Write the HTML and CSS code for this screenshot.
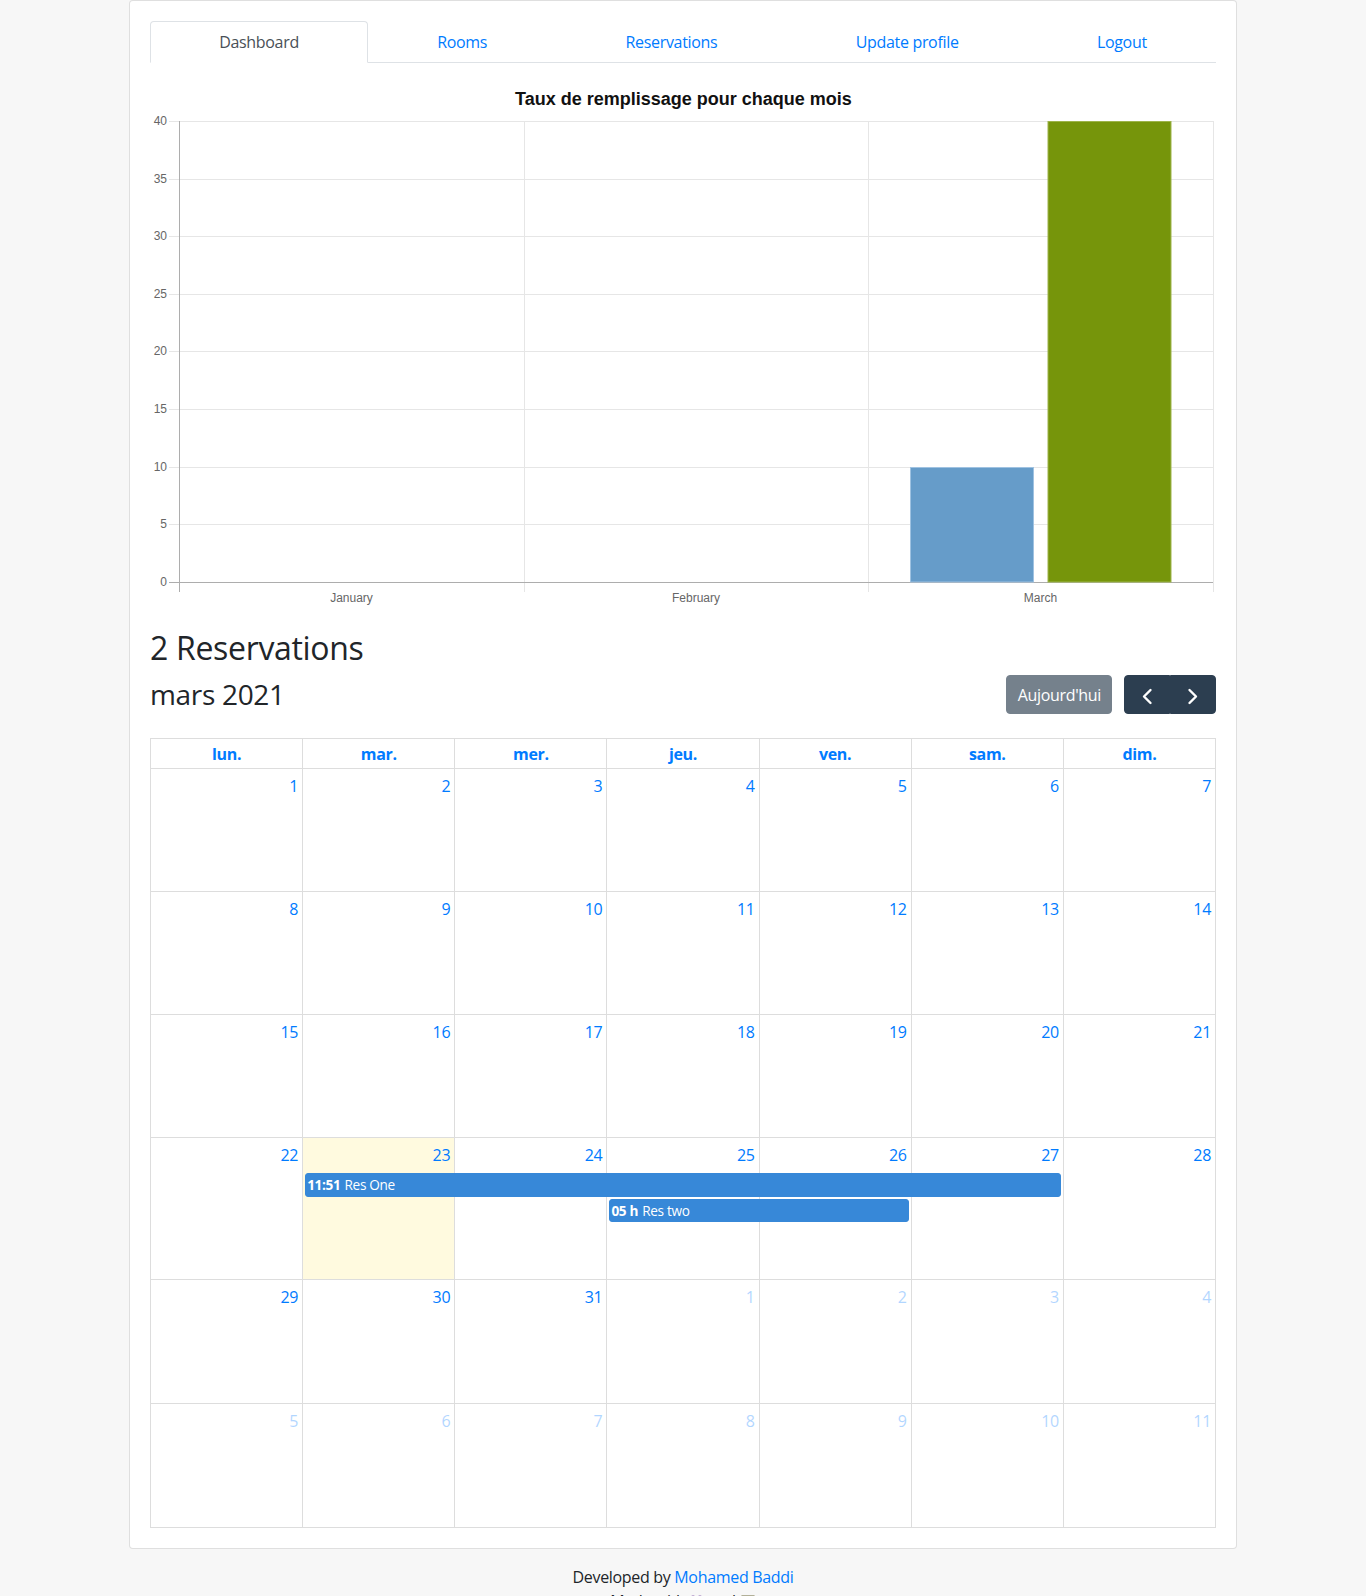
FILE: index.html
```html
<!DOCTYPE html>
<html lang="fr">
<head>
<meta charset="utf-8">
<title>Dashboard</title>
<link rel="stylesheet" href="styles.css">
</head>
<body>
<div class="container">
  <div class="card">
    <div class="card-body">
      <ul class="nav-tabs">
        <li class="nav-item"><a class="nav-link active">Dashboard</a></li>
        <li class="nav-item"><a class="nav-link">Rooms</a></li>
        <li class="nav-item"><a class="nav-link">Reservations</a></li>
        <li class="nav-item"><a class="nav-link">Update profile</a></li>
        <li class="nav-item"><a class="nav-link">Logout</a></li>
      </ul>

      <svg class="chart" width="1066" height="566" viewBox="0 0 1066 566" xmlns="http://www.w3.org/2000/svg">
        <text class="chart-title" x="533.5" y="42" text-anchor="middle">Taux de remplissage pour chaque mois</text>
        <g class="grid-h">
          <line x1="19" y1="58.5" x2="1063" y2="58.5"/>
          <line x1="19" y1="116.5" x2="1063" y2="116.5"/>
          <line x1="19" y1="173.5" x2="1063" y2="173.5"/>
          <line x1="19" y1="231.5" x2="1063" y2="231.5"/>
          <line x1="19" y1="288.5" x2="1063" y2="288.5"/>
          <line x1="19" y1="346.5" x2="1063" y2="346.5"/>
          <line x1="19" y1="404.5" x2="1063" y2="404.5"/>
          <line x1="19" y1="461.5" x2="1063" y2="461.5"/>
          <line x1="374.5" y1="58" x2="374.5" y2="529"/>
          <line x1="718.5" y1="58" x2="718.5" y2="529"/>
          <line x1="1063.5" y1="58" x2="1063.5" y2="529"/>
        </g>
        <g class="axis">
          <line x1="19" y1="519.5" x2="1063" y2="519.5"/>
          <line x1="29.5" y1="58" x2="29.5" y2="529"/>
        </g>
        <g class="tick-y" text-anchor="end">
          <text x="17" y="62">40</text>
          <text x="17" y="120">35</text>
          <text x="17" y="177">30</text>
          <text x="17" y="235">25</text>
          <text x="17" y="292">20</text>
          <text x="17" y="350">15</text>
          <text x="17" y="408">10</text>
          <text x="17" y="465">5</text>
          <text x="17" y="523">0</text>
        </g>
        <g class="tick-x" text-anchor="middle">
          <text x="201.5" y="539">January</text>
          <text x="546" y="539">February</text>
          <text x="890.5" y="539">March</text>
        </g>
        <rect class="bar-blue" x="760.5" y="404.5" width="123" height="114.5"/>
        <rect class="bar-green" x="898" y="58.5" width="123" height="460.5"/>
      </svg>

      <h2 class="count">2 Reservations</h2>

      <div class="calendar">
        <div class="toolbar">
          <h2 class="cal-title">mars 2021</h2>
          <div class="tools">
            <button class="btn btn-today" disabled>Aujourd'hui</button>
            <div class="btn-group">
              <button class="btn btn-icon btn-prev" aria-label="prev">
                <svg width="24" height="24" viewBox="0 0 24 24"><polyline points="15.5,7 9,13.5 15.5,20" fill="none" stroke="#fff" stroke-width="2.4" stroke-linecap="round" stroke-linejoin="round"/></svg>
              </button>
              <button class="btn btn-icon btn-next" aria-label="next">
                <svg width="24" height="24" viewBox="0 0 24 24"><polyline points="8.5,7 15,13.5 8.5,20" fill="none" stroke="#fff" stroke-width="2.4" stroke-linecap="round" stroke-linejoin="round"/></svg>
              </button>
            </div>
          </div>
        </div>

        <div class="cal-grid">
          <div class="head-row">
            <div class="head-cell">lun.</div>
            <div class="head-cell">mar.</div>
            <div class="head-cell">mer.</div>
            <div class="head-cell">jeu.</div>
            <div class="head-cell">ven.</div>
            <div class="head-cell">sam.</div>
            <div class="head-cell">dim.</div>
          </div>

          <div class="week">
            <div class="day"><span class="num">1</span></div>
            <div class="day"><span class="num">2</span></div>
            <div class="day"><span class="num">3</span></div>
            <div class="day"><span class="num">4</span></div>
            <div class="day"><span class="num">5</span></div>
            <div class="day"><span class="num">6</span></div>
            <div class="day"><span class="num">7</span></div>
          </div>
          <div class="week">
            <div class="day"><span class="num">8</span></div>
            <div class="day"><span class="num">9</span></div>
            <div class="day"><span class="num">10</span></div>
            <div class="day"><span class="num">11</span></div>
            <div class="day"><span class="num">12</span></div>
            <div class="day"><span class="num">13</span></div>
            <div class="day"><span class="num">14</span></div>
          </div>
          <div class="week">
            <div class="day"><span class="num">15</span></div>
            <div class="day"><span class="num">16</span></div>
            <div class="day"><span class="num">17</span></div>
            <div class="day"><span class="num">18</span></div>
            <div class="day"><span class="num">19</span></div>
            <div class="day"><span class="num">20</span></div>
            <div class="day"><span class="num">21</span></div>
          </div>
          <div class="week week-events">
            <div class="day"><span class="num">22</span></div>
            <div class="day today"><span class="num">23</span></div>
            <div class="day"><span class="num">24</span></div>
            <div class="day"><span class="num">25</span></div>
            <div class="day"><span class="num">26</span></div>
            <div class="day"><span class="num">27</span></div>
            <div class="day"><span class="num">28</span></div>
            <div class="event event-one"><b class="ev-time">11:51</b><span class="ev-title">Res One</span></div>
            <div class="event event-two"><b class="ev-time">05 h</b><span class="ev-title">Res two</span></div>
          </div>
          <div class="week week-tall">
            <div class="day"><span class="num">29</span></div>
            <div class="day"><span class="num">30</span></div>
            <div class="day"><span class="num">31</span></div>
            <div class="day other"><span class="num">1</span></div>
            <div class="day other"><span class="num">2</span></div>
            <div class="day other"><span class="num">3</span></div>
            <div class="day other"><span class="num">4</span></div>
          </div>
          <div class="week week-tall">
            <div class="day other"><span class="num">5</span></div>
            <div class="day other"><span class="num">6</span></div>
            <div class="day other"><span class="num">7</span></div>
            <div class="day other"><span class="num">8</span></div>
            <div class="day other"><span class="num">9</span></div>
            <div class="day other"><span class="num">10</span></div>
            <div class="day other"><span class="num">11</span></div>
          </div>
        </div>
      </div>
    </div>
  </div>
</div>

<footer class="footer">
  <p class="footer-line">Developed by <a class="link">Mohamed Baddi</a></p>
  <p class="footer-line">Made with
    <svg class="ic-heart" width="15" height="14" viewBox="0 0 15 14"><path d="M7.5 13 C2 9 0.5 6.5 0.5 4.2 C0.5 2 2.2 0.5 4.1 0.5 C5.5 0.5 6.8 1.3 7.5 2.5 C8.2 1.3 9.5 0.5 10.9 0.5 C12.8 0.5 14.5 2 14.5 4.2 C14.5 6.5 13 9 7.5 13 Z" fill="#7d4fa8"/></svg>
    and
    <svg class="ic-coffee" width="16" height="14" viewBox="0 0 16 14"><rect x="0.5" y="0.5" width="15" height="13" rx="1.5" fill="#6f6b3b"/></svg>
  </p>
</footer>
</body>
</html>
```

FILE: styles.css
```css
* {
  box-sizing: border-box;
}

html, body {
  margin: 0;
  padding: 0;
}

body {
  background: #f7f7f7;
  color: #212529;
  font-family: "Open Sans", "Noto Sans", "DejaVu Sans", sans-serif;
  font-size: 16px;
  line-height: 1.5;
  letter-spacing: -0.02em;
}

.container {
  width: 1140px;
  margin: 0 auto;
  padding: 0 16px;
}

.card {
  background: #fff;
  border: 1px solid rgba(0, 0, 0, 0.125);
  border-radius: 4px;
}

.card-body {
  padding: 20px;
}

/* Tabs */
.nav-tabs {
  display: flex;
  list-style: none;
  margin: 0;
  padding: 0;
  border-bottom: 1px solid #dee2e6;
}

.nav-item {
  flex: 1 1 auto;
  text-align: center;
  margin-bottom: -1px;
}

.nav-link {
  display: block;
  padding: 8px 16px;
  border: 1px solid transparent;
  border-top-left-radius: 4px;
  border-top-right-radius: 4px;
  color: #007bff;
  line-height: 24px;
  cursor: pointer;
}

.nav-link.active {
  color: #495057;
  background: #fff;
  border-color: #dee2e6 #dee2e6 #fff;
}

/* Chart */
.chart {
  display: block;
  letter-spacing: 0;
  font-family: "Liberation Sans", Arial, sans-serif;
}

.chart-title {
  font-size: 18px;
  font-weight: 700;
  fill: #111;
}

.grid-h line {
  stroke: #e6e6e6;
  stroke-width: 1;
}

.axis line {
  stroke: #adadad;
  stroke-width: 1;
}

.tick-y text,
.tick-x text {
  font-size: 12px;
  fill: #666;
}

.bar-blue {
  fill: #669cc9;
  stroke: #9fc2e1;
  stroke-width: 1;
}

.bar-green {
  fill: #76950b;
  stroke: #9db44a;
  stroke-width: 1;
}

/* Headings */
.count {
  margin: 0 0 8px;
  font-size: 32px;
  font-weight: 500;
  line-height: 1.2;
}

/* Calendar toolbar */
.toolbar {
  display: flex;
  justify-content: space-between;
  align-items: center;
  margin-bottom: 24px;
}

.cal-title {
  margin: 0;
  font-size: 28px;
  font-weight: 500;
  line-height: 1.2;
}

.tools {
  display: flex;
  align-items: center;
  gap: 12px;
}

.btn {
  font-family: inherit;
  font-size: 16px;
  line-height: 24px;
  letter-spacing: -0.02em;
  color: #fff;
  background: #2c3e50;
  border: 1px solid #2c3e50;
  border-radius: 4px;
  padding: 6.4px 10.4px;
  margin: 0;
}

.btn-today {
  opacity: 0.65;
}

.btn-group {
  display: flex;
}

.btn-icon {
  padding: 6.4px 9.9px;
  display: flex;
}

.btn-icon svg {
  display: block;
}

.btn-prev {
  border-top-right-radius: 0;
  border-bottom-right-radius: 0;
}

.btn-next {
  border-top-left-radius: 0;
  border-bottom-left-radius: 0;
}

/* Calendar grid */
.cal-grid {
  border-top: 1px solid #ddd;
  border-left: 1px solid #ddd;
}

.head-row {
  display: grid;
  grid-template-columns: repeat(7, 1fr);
}

.head-cell {
  border-right: 1px solid #ddd;
  border-bottom: 1px solid #ddd;
  padding: 3px 4px 2px;
  text-align: center;
  font-weight: 700;
  color: #007bff;
  line-height: 24px;
}

.week {
  display: grid;
  grid-template-columns: repeat(7, 1fr);
  grid-template-rows: 32px auto auto 1fr;
  height: 123px;
}

.week-events {
  height: 142px;
}

.week-tall {
  height: 124px;
}

.day {
  grid-row: 1 / -1;
  border-right: 1px solid #ddd;
  border-bottom: 1px solid #ddd;
  text-align: right;
}

.day:nth-child(1) { grid-column: 1; }
.day:nth-child(2) { grid-column: 2; }
.day:nth-child(3) { grid-column: 3; }
.day:nth-child(4) { grid-column: 4; }
.day:nth-child(5) { grid-column: 5; }
.day:nth-child(6) { grid-column: 6; }
.day:nth-child(7) { grid-column: 7; }

.day.today {
  background: rgba(255, 220, 40, 0.15);
}

.num {
  display: inline-block;
  padding: 5px 4px 3px;
  line-height: 24px;
  color: #007bff;
}

.day.other .num {
  opacity: 0.3;
}

.event {
  display: flex;
  gap: 4px;
  background: #3788d8;
  border: 1px solid #3788d8;
  border-radius: 3px;
  color: #fff;
  font-size: 13.6px;
  line-height: 19.5px;
  padding: 1px 1px;
  white-space: nowrap;
  overflow: hidden;
}

.event-one {
  grid-row: 2;
  grid-column: 2 / 7;
  margin: 3px 3px 0 2px;
}

.event-two {
  grid-row: 3;
  grid-column: 4 / 6;
  margin: 2px 3px 0 2px;
}

.ev-time {
  font-weight: 700;
}

/* Footer */
.footer {
  text-align: center;
  padding-top: 16px;
}

.footer-line {
  margin: 0;
  line-height: 24px;
}

.link {
  color: #007bff;
}

.ic-heart,
.ic-coffee {
  vertical-align: -2px;
}
```
